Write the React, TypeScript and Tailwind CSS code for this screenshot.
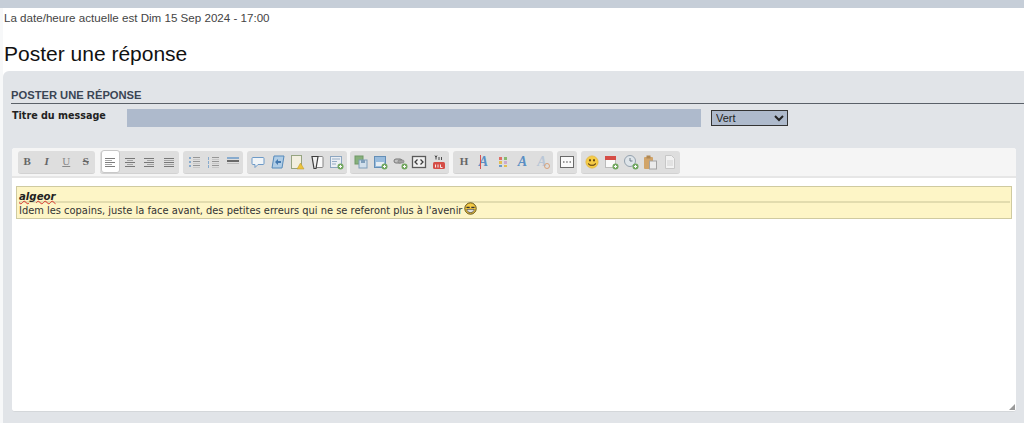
import React from 'react';

const Icon: React.FC<{ children: React.ReactNode }> = ({ children }) => (
  <svg width="16" height="16" viewBox="0 0 16 16" fill="none" className="opacity-85">{children}</svg>
);

const Btn: React.FC<{ children: React.ReactNode; active?: boolean }> = ({ children, active }) => (
  <div
    className={`flex items-center justify-center w-[19.5px] h-[23px] shrink-0 ${
      active ? 'bg-white rounded-[3px] border border-[#c8c8c8]' : ''
    }`}
  >
    {children}
  </div>
);

const Group: React.FC<{ children: React.ReactNode; className: string }> = ({ children, className }) => (
  <div className={`flex items-center justify-center h-[23px] bg-[#dedede] rounded-[3px] border-b border-[#d2d2d2] ${className}`}>
    {children}
  </div>
);

const Letter: React.FC<{ children: React.ReactNode; className?: string }> = ({ children, className = '' }) => (
  <span className={`font-['Liberation_Serif',serif] font-bold text-[11px] leading-none text-[#666] ${className}`}>{children}</span>
);

const Lines: React.FC<{ rows: [number, number][] }> = ({ rows }) => (
  <Icon>
    {rows.map(([x, w], i) => (
      <rect key={i} x={x} y={4 + i * 2} width={w} height="1" fill={i % 2 ? '#9a9a9a' : '#666'} />
    ))}
  </Icon>
);

const ListIcon: React.FC<{ numbered?: boolean }> = ({ numbered }) => (
  <Icon>
    {[4, 8, 12].map((y) => (
      <React.Fragment key={y}>
        <rect x="3" y={y - 1} width={numbered ? 1 : 2} height={numbered ? 3 : 2} fill="#7aa3cc" />
        <rect x="7" y={y - 1} width="7" height="1" fill="#8a8a8a" />
        <rect x="7" y={y + 1} width="7" height="1" fill="#c4c4c4" />
      </React.Fragment>
    ))}
  </Icon>
);

const Plus: React.FC = () => (
  <g>
    <circle cx="12.5" cy="12.5" r="3" fill="#5e9e4a" />
    <path d="M12.5 11v3M11 12.5h3" stroke="#fff" strokeWidth="1" />
  </g>
);

const Smiley: React.FC<{ size: number; grin?: boolean }> = ({ size, grin }) => (
  <svg width={size} height={size} viewBox="0 0 16 16" fill="none">
    <circle cx="8" cy="8" r="7" fill="#f5cb45" stroke={grin ? '#5a4a10' : '#e2b33a'} strokeWidth={grin ? 1.2 : 0.8} />
    {grin ? (
      <>
        <path d="M3 6.5h4M9 6.5h4" stroke="#333" strokeWidth="1.6" />
        <path d="M3.5 9h9c0 2.5-2 4-4.5 4s-4.5-1.5-4.5-4z" fill="#fff" stroke="#333" strokeWidth="0.9" />
        <path d="M4 11h8" stroke="#888" strokeWidth="0.6" />
      </>
    ) : (
      <>
        <ellipse cx="5.7" cy="6" rx="1" ry="1.5" fill="#5a3b10" />
        <ellipse cx="10.3" cy="6" rx="1" ry="1.5" fill="#5a3b10" />
        <path d="M3.8 9.5c1 3 7.4 3 8.4 0" stroke="#5a3b10" strokeWidth="1.2" />
      </>
    )}
  </svg>
);

const Toolbar: React.FC = () => (
  <div className="flex items-center h-[30px] pl-[6px] bg-[#f5f5f5] border-b-2 border-[#e6e6e6] rounded-t-[3px]">
    <Group className="w-[77px] mr-[5px]">
      <Btn><Letter>B</Letter></Btn>
      <Btn><Letter className="italic">I</Letter></Btn>
      <Btn><Letter className="underline font-normal text-[#888]">U</Letter></Btn>
      <Btn><Letter className="line-through">S</Letter></Btn>
    </Group>
    <Group className="w-[79px] mr-[4px]">
      <Btn active><Lines rows={[[3, 10], [3, 7], [3, 10], [3, 7], [3, 10]]} /></Btn>
      <Btn><Lines rows={[[3, 10], [5, 6], [3, 10], [5, 6], [3, 10]]} /></Btn>
      <Btn><Lines rows={[[3, 10], [6, 7], [3, 10], [6, 7], [3, 10]]} /></Btn>
      <Btn><Lines rows={[[3, 10], [3, 10], [3, 10], [3, 10], [3, 10]]} /></Btn>
    </Group>
    <Group className="w-[60px] mr-[4px]">
      <Btn><ListIcon /></Btn>
      <Btn><ListIcon numbered /></Btn>
      <Btn>
        <Icon>
          <rect x="2" y="3" width="12" height="2" fill="#7aa3cc" />
          <rect x="2" y="6" width="12" height="2" fill="#555" />
          <rect x="2" y="9" width="12" height="1" fill="#b5b5b5" />
        </Icon>
      </Btn>
    </Group>
    <Group className="w-[100px] mr-[3px]">
      <Btn>
        <Icon>
          <path d="M3 3.5h10a1 1 0 0 1 1 1v5a1 1 0 0 1-1 1H8l-3 3v-3H3a1 1 0 0 1-1-1v-5a1 1 0 0 1 1-1z" fill="#f4f8fc" stroke="#5b8fc4" />
        </Icon>
      </Btn>
      <Btn>
        <Icon>
          <path d="M4 2h10l-2 12H2z" fill="#a9cbe8" stroke="#3f7cb5" />
          <path d="M5 8l3-3v2h3v2H8v2z" fill="#2a68a8" />
        </Icon>
      </Btn>
      <Btn>
        <Icon>
          <rect x="2.5" y="1.5" width="10" height="13" fill="#f6f3e0" stroke="#8a9a70" />
          <path d="M11.5 9l3.5 6H8z" fill="#f0c020" stroke="#b58a10" strokeWidth="0.5" />
        </Icon>
      </Btn>
      <Btn>
        <Icon>
          <rect x="6" y="2.5" width="8" height="11" rx="1" fill="#fff" stroke="#777" />
          <path d="M3 2.5h6l-2 12H5z" fill="#f4f4f4" stroke="#222" strokeWidth="1.2" />
        </Icon>
      </Btn>
      <Btn>
        <Icon>
          <rect x="2.5" y="2.5" width="11" height="11" fill="#eef3f8" stroke="#7f9dbb" />
          <path d="M4 5h8M4 7.5h5M4 10h4" stroke="#8aa5c0" />
          <Plus />
        </Icon>
      </Btn>
    </Group>
    <Group className="w-[99px] mr-[4px]">
      <Btn>
        <Icon>
          <rect x="2" y="2" width="8" height="8" fill="#79a96a" stroke="#5c8b52" />
          <rect x="6" y="6" width="8" height="8" fill="#cfe0ee" stroke="#6f93b4" />
          <rect x="8" y="6" width="4" height="3" fill="#6f93b4" />
        </Icon>
      </Btn>
      <Btn>
        <Icon>
          <rect x="2.5" y="2.5" width="11" height="11" fill="#8db7dd" stroke="#4f81b0" />
          <rect x="4" y="8" width="8" height="4" fill="#e8f0f7" />
          <Plus />
        </Icon>
      </Btn>
      <Btn>
        <Icon>
          <rect x="2" y="5" width="8" height="4" rx="2" fill="#bbb" stroke="#666" />
          <rect x="6" y="6" width="6" height="3" rx="1.5" fill="#999" stroke="#666" strokeWidth="0.6" />
          <Plus />
        </Icon>
      </Btn>
      <Btn>
        <Icon>
          <rect x="1.5" y="2.5" width="13" height="11" fill="#f4f4f4" stroke="#444" strokeWidth="1.3" />
          <path d="M6.5 5.5L4 8l2.5 2.5M9.5 5.5L12 8l-2.5 2.5" stroke="#222" strokeWidth="1.3" />
        </Icon>
      </Btn>
      <Btn>
        <Icon>
          <rect x="2" y="8" width="12" height="7" rx="1.5" fill="#d4342c" />
          <path d="M4.5 10.5v3M7 10.5v3M9.5 10.5v3h2" stroke="#fff" strokeWidth="0.9" />
          <path d="M4 1.5l1 2v2M6 1.5l-1 2M8 3v3M10.5 3v3" stroke="#333" strokeWidth="1" />
        </Icon>
      </Btn>
    </Group>
    <Group className="w-[100px] mr-[4px]">
      <Btn><Letter className="text-[#444]">H</Letter></Btn>
      <Btn>
        <div className="relative flex">
          <span className="font-['Liberation_Serif',serif] font-bold italic text-[14px] leading-none text-[#5b8fc4]">A</span>
          <span className="absolute left-px top-0 bottom-0 w-px bg-[#d9534f]" />
        </div>
      </Btn>
      <Btn>
        <Icon>
          <rect x="4" y="3" width="3" height="3" fill="#e05a4f" />
          <rect x="9" y="3" width="3" height="3" fill="#7ab45c" />
          <rect x="4" y="7" width="3" height="3" fill="#e5b93c" />
          <rect x="9" y="7" width="3" height="3" fill="#c9a0c9" />
          <rect x="4" y="11" width="3" height="2" fill="#5b8fc4" />
          <rect x="9" y="11" width="3" height="2" fill="#e5b93c" />
        </Icon>
      </Btn>
      <Btn><span className="font-['Liberation_Serif',serif] font-bold italic text-[14px] leading-none text-[#5b8fc4]">A</span></Btn>
      <Btn>
        <div className="relative flex">
          <span className="font-['Liberation_Serif',serif] font-bold italic text-[14px] leading-none text-[#b9c6d6]">A</span>
          <span className="absolute right-[-3px] bottom-0 w-[6px] h-[6px] rounded-full border border-[#d9a27a]" />
        </div>
      </Btn>
    </Group>
    <Group className="w-[20px] mr-[4px]">
      <Btn>
        <Icon>
          <rect x="1.5" y="2.5" width="13" height="11" fill="#fff" stroke="#555" />
          <path d="M4 8h1.5M7.2 8h1.5M10.5 8H12" stroke="#222" strokeWidth="1.2" />
        </Icon>
      </Btn>
    </Group>
    <Group className="w-[99px]">
      <Btn><Smiley size={14} /></Btn>
      <Btn>
        <Icon>
          <rect x="2.5" y="3.5" width="10" height="10" fill="#fff" stroke="#b5b5b5" />
          <rect x="2" y="2" width="11" height="4" fill="#d4342c" />
          <Plus />
        </Icon>
      </Btn>
      <Btn>
        <Icon>
          <circle cx="7" cy="7" r="5.5" fill="#dfe6ec" stroke="#8796a5" />
          <path d="M7 4v3h2.5" stroke="#5b6b7a" />
          <Plus />
        </Icon>
      </Btn>
      <Btn>
        <Icon>
          <rect x="2" y="3" width="9" height="12" rx="1" fill="#cf9a55" />
          <rect x="4.5" y="1.5" width="4" height="3" fill="#a87a3c" />
          <rect x="7.5" y="7" width="7" height="8" fill="#eee" stroke="#999" />
        </Icon>
      </Btn>
      <Btn>
        <Icon>
          <path d="M3.5 1.5h6l3 3v10h-9z" fill="#f6f6f6" stroke="#c4c4c4" />
          <path d="M5 7h6M5 9h6M5 11h6" stroke="#d0d0d0" />
        </Icon>
      </Btn>
    </Group>
  </div>
);

export default function App() {
  return (
    <div className="h-[423px] overflow-hidden bg-white font-['Liberation_Sans',Arial,sans-serif]">
      <div className="h-[8px] bg-[#c6ced8]" />
      <div className="flex h-[415px]">
        <div className="w-[3px] shrink-0 bg-[#f7f8f9]" />
        <div className="flex-1 min-w-0 flex flex-col">
          <p className="pl-px pt-[3px] text-[11.6px] leading-[14px] text-[#444]">La date/heure actuelle est Dim 15 Sep 2024 - 17:00</p>
          <h1 className="pl-px mt-[16px] text-[21px] leading-[26px] font-normal text-[#111]">Poster une réponse</h1>
          <div className="mt-[4px] flex-1 bg-[#e1e4e8] rounded-tl-[6px] pl-[8px] pt-[18px]">
            <h2 className="h-[15px] text-[11.2px] leading-[12px] font-bold text-[#3a4554] border-b border-[#5a6068]">POSTER UNE RÉPONSE</h2>
            <div className="flex items-start pt-[5px]">
              <label className="w-[116px] shrink-0 pl-px font-['DejaVu_Sans',Verdana,sans-serif] font-bold text-[9.6px] leading-[13px] text-[#222]">Titre du message</label>
              <div className="w-[574px] h-[18px] bg-[#aebacc]" />
              <select
                defaultValue="Vert"
                className="ml-[10px] mt-px w-[77px] h-[16px] bg-[#aebacc] border border-[#333] text-[11px] leading-[14px] text-[#222] font-['Liberation_Sans',Arial,sans-serif]"
              >
                <option>Vert</option>
              </select>
            </div>
            <div className="relative mt-[21px] ml-px w-[1004px] h-[264px] bg-white rounded-[3px] border-b border-[#d4d7da] flex flex-col">
              <Toolbar />
              <div className="mt-[8px] mx-[4px] h-[33px] bg-[#fdf5c6] border border-[#cfcaa0] pl-[2px] pr-px font-['DejaVu_Sans',Verdana,sans-serif] text-[9.9px] text-[#333]">
                <div className="h-[16px] border-b-2 border-[#e2dcae] text-[10.2px] leading-[19px] font-bold italic text-[#222]">
                  <span className="underline decoration-wavy decoration-[#d9342c] decoration-1 underline-offset-0">algeor</span>
                </div>
                <div className="flex items-center h-[15px] leading-[15px] whitespace-nowrap">
                  Idem les copains, juste la face avant, des petites erreurs qui ne se referont plus à l'avenir
                  <span className="ml-[2px] -mt-[5px]"><Smiley size={13} grin /></span>
                </div>
              </div>
              <svg className="absolute right-px bottom-px" width="6" height="6" viewBox="0 0 6 6">
                <path d="M6 0v6H0z" fill="#999" />
              </svg>
            </div>
          </div>
        </div>
      </div>
    </div>
  );
}
